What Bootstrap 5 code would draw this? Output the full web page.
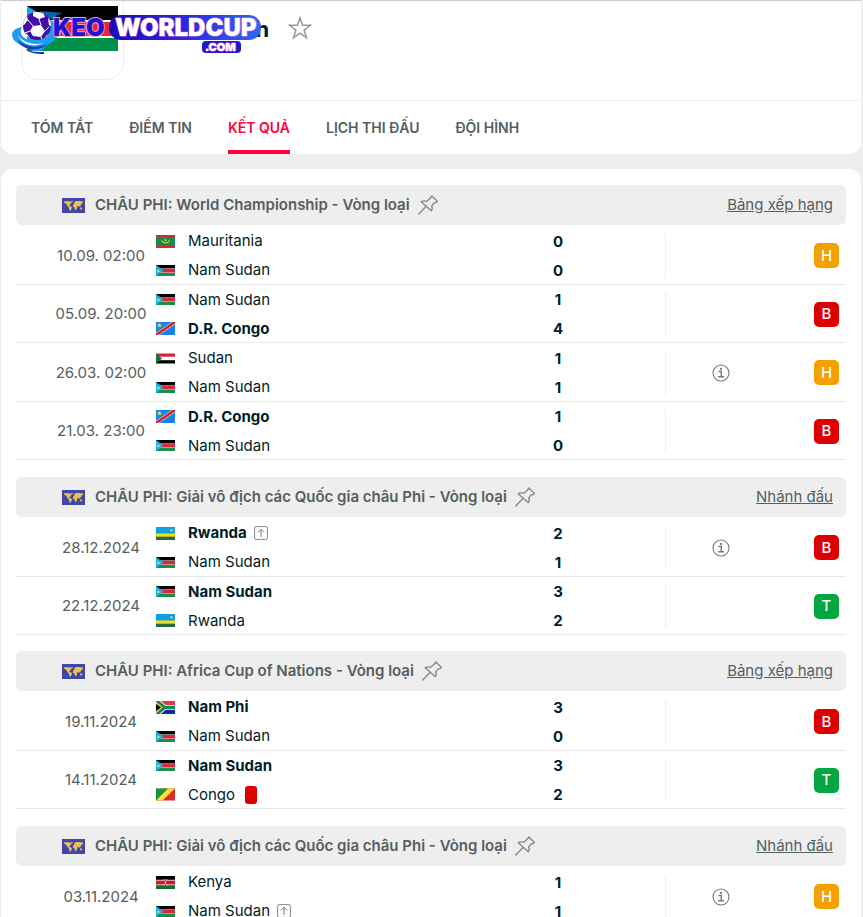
<!DOCTYPE html>
<html lang="vi">
<head>
<meta charset="utf-8">
<meta name="viewport" content="width=device-width, initial-scale=1">
<title>Nam Sudan - Kết quả</title>
<link href="https://cdn.jsdelivr.net/npm/bootstrap@5.3.0/dist/css/bootstrap.min.css" rel="stylesheet">
<style>
  body { background: #eee; color: #001e28; font-family: Inter, "Liberation Sans", sans-serif; font-size: 15px; line-height: 20px; overflow-x: hidden; }
  .panel { background: #fff; margin: 0 2px 0 1px; }
  .panel-top { border-top: 1px solid #ccc; border-radius: 0 0 12px 12px; }
  .panel-main { border-radius: 12px 12px 0 0; margin-top: 15px; padding: 16px 15px 0; }
  .team-head { height: 99px; padding-left: 20px; }
  .crest { width: 103px; height: 79px; border: 1px solid #eee; border-top: 0; border-radius: 0 0 18px 18px; padding: 5px; }
  .crest svg { width: 91px; height: 45px; }
  .team-name { font-size: 22px; line-height: 30px; font-weight: 700; margin: 13px 0 0 22px; }
  .fav { margin: 15px 0 0 19px; color: #999; line-height: 0; }
  .brand { left: 10px; top: 4px; }
  .tabs { gap: 36px; padding: 0 30px; border-top: 1px solid #eee; }
  .tabs a { color: #555e61; font-size: 14px; font-weight: 600; line-height: 20px; padding: 17px 0 12px; border-bottom: 4px solid transparent; text-decoration: none; }
  .tabs a.active { color: #ff0046; border-color: #ff0046; }
  .group { margin-bottom: 17px; }
  .group:nth-child(even) { margin-bottom: 16px; }
  .group-head { height: 40px; background: #eee; border-radius: 6px; padding: 0 13px 0 46px; margin-bottom: 1px; color: #555e61; }
  .group-head h2 { font-size: 15px; line-height: 20px; font-weight: 600; margin: 0 8px 0 10px; }
  .group-head a { color: #555e61; }
  .pin { color: #888; line-height: 0; }
  .matches { table-layout: fixed; color: inherit; }
  .matches td { padding: 0; height: 59px; border: 0; box-shadow: inset 0 -1px #e8e8e8; background: none; color: inherit; }
  .matches tr:nth-child(even) td { height: 58px; }
  .c-time { width: 140px; }
  .c-score { width: 214px; }
  .c-info { width: 110px; }
  .c-form { width: 71px; }
  .matches td.when { color: #555e61; padding-left: 30px; }
  .matches td.outcome { padding-right: 7px; }
  .side { height: 29px; display: flex; align-items: center; gap: 13px; }
  .side svg.fl { width: 19px; height: 13px; flex: none; }
  .side .extra { margin-left: -6px; }
  .side .red-card { margin-left: -3px; }
  .score { line-height: 29px; font-weight: 700; }
  .note { height: 44px; border-left: 1px solid #eee; color: #777; }
  .form-tag { width: 25px; height: 25px; border-radius: 5px; color: #fff; font-weight: 500; }
  .draw { background: #f3a000; }
  .loss { background: #dc0000; }
  .win { background: #00a83f; }
  .red-card { width: 12px; height: 18px; border-radius: 3px; background: #dc0000; }
</style>
<script src="https://cdn.jsdelivr.net/npm/bootstrap@5.3.0/dist/js/bootstrap.bundle.min.js"></script>
</head>
<body>
<svg width="0" height="0" class="position-absolute" aria-hidden="true">
  <defs>
    <symbol id="ssd" viewBox="0 0 19 13"><path fill="#000" d="M0 1h19v4H0z"/><path fill="#e9c9c9" d="M0 4.400h19v5H0z"/><path fill="#d8283a" d="M0 5h19v3.400H0z"/><path fill="#16904a" d="M0 9h19v3H0z"/><path fill="#19b5e0" d="M0 1l7.500 5.500L0 12z"/><path fill="#c8e9b0" d="M1.500 5.200l1 .9 1.200-.2-.6 1 .6 1-1.200-.2-1 .8z"/></symbol>
    <symbol id="mrt" viewBox="0 0 19 13"><path fill="#cf2b37" d="M0 0h19v13H0z"/><path fill="#178c4b" d="M0 2h19v9H0z"/><path fill="none" stroke="#f2d432" stroke-width="1.200" d="M5.500 5.500q4 5 8 0"/><circle cx="9.500" cy="5" r=".9" fill="#f2d432"/></symbol>
    <symbol id="cod" viewBox="0 0 19 13"><path fill="#1683ee" d="M0 0h19v13H0z"/><path stroke="#f0d2a0" stroke-width="3.800" d="M0 13L19 0"/><path stroke="#cd2433" stroke-width="2.600" d="M0 13L19 0"/><path fill="#f7e03c" d="M3.500 1l.7 1.500 1.700.1-1.200 1.100.4 1.700-1.600-.9-1.500.9.4-1.700-1.300-1.100 1.700-.1z"/></symbol>
    <symbol id="sdn" viewBox="0 0 19 13"><path fill="#fff" d="M0 1h19v10H0z"/><path fill="#dc1f3a" d="M0 1.500h19v3.200H0z"/><path fill="#000" d="M0 8.200h19v3.300H0z"/><path fill="#14763b" d="M0 1.500l6 5-6 5z"/></symbol>
    <symbol id="rwa" viewBox="0 0 19 13"><path fill="#0fa0e0" d="M0 0h19v7H0z"/><path fill="#f6db1f" d="M0 6.500h19V10H0z"/><path fill="#276b3e" d="M0 9.700h19V13H0z"/><circle cx="15.500" cy="3.200" r="1.300" fill="#d9c95b"/></symbol>
    <symbol id="zaf" viewBox="0 0 19 13"><path fill="#e23b3f" d="M0 0h19v6H0z"/><path fill="#0b2c9d" d="M0 7h19v6H0z"/><path fill="none" stroke="#fff" stroke-width="4.600" d="M1 0l8 6.500L1 13M9 6.500h10"/><path fill="#f5b82e" d="M0 1.500l7 5-7 5z"/><path fill="none" stroke="#118456" stroke-width="2.800" d="M1 0l8 6.500L1 13M9 6.500h10"/><path fill="#000" d="M0 3l5 3.500L0 10z"/></symbol>
    <symbol id="cog" viewBox="0 0 19 13"><path fill="#dd2a24" d="M0 .5h19v12H0z"/><path fill="#f9de3c" d="M0 .5h19L6.500 12.500H0z"/><path fill="#13963f" d="M0 .5h12L0 12.500z"/></symbol>
    <symbol id="ken" viewBox="0 0 19 13"><path fill="#000" d="M0 0h19v5H0z"/><path fill="#156b2f" d="M0 8h19v5H0z"/><path fill="#fff" d="M0 3.800h19v5.400H0z"/><path fill="#c81c2c" d="M0 4.500h19v4H0z"/><ellipse cx="9.500" cy="6.500" rx="1.700" ry="3.800" fill="#a01420"/><path stroke="#fff" stroke-width=".7" d="M8 3l3 7M11 3L8 10"/></symbol>
    <symbol id="map" viewBox="0 0 23 15"><path fill="#3f48a8" d="M0 0h23v15H0z"/><path fill="#ecc055" d="M2 3.500l4-.5 1.500.8L10.500 3l.5.800-2 1.200-1 1.900-1 .3.700.9 2.300.9-.4 1.800-1.500 2.400-.9-2.300-.5-1.700-1.600-1.700L4 5.600 2 4.800zM12 4.500l2-1.500 3 .1 3.700.4.500 1.300-1.700.9-.7 1.900-1.200.4-.5 1.200-1-1.300-1 .200.200 1.200-.8 1.900-1 1.300-.8-1.700-.3-1.600-1.500-.5L11 6.700l1.300-1zM18 9.300l2 .5.300 1.500-2 .200z"/></symbol>
    <symbol id="pin" viewBox="0 0 20 20"><path fill="none" stroke="currentColor" stroke-width="1.400" stroke-linejoin="round" stroke-linecap="round" d="M13.800 1l5.500 5.300-1 1.200-2.200.4-2.400 3.300c.9 1.700.7 3-.3 4.500L3.200 6.800c1.600-1.100 3.300-1.200 5.400-.5l3.700-3zM8 11.500L.8 18.900"/></symbol>
    <symbol id="info" viewBox="0 0 18 18"><circle cx="9" cy="9" r="8" fill="none" stroke="currentColor" stroke-width="1.100"/><path fill="none" stroke="currentColor" stroke-width="1.400" d="M6.500 7.500h2.800v5M6.200 12.700h5.800"/><circle cx="9" cy="4.900" r="1.100" fill="currentColor"/></symbol>
    <symbol id="adv" viewBox="0 0 14 14"><rect x=".6" y=".6" width="12.800" height="12.800" rx="1.500" fill="none" stroke="#888" stroke-width="1"/><path fill="none" stroke="#777" stroke-width="1" d="M7 11V3.500M3.800 6.500L7 3.300l3.200 3.200"/></symbol>
  </defs>
</svg>

<header class="panel panel-top position-relative">
  <div class="team-head d-flex align-items-start">
    <div class="crest">
      <svg viewBox="0 0 92 45" preserveAspectRatio="none" class="d-block" role="img" aria-label="Cờ Nam Sudan"><path d="M0 0h92v15H0z"/><path fill="#fff" d="M0 14h92v18H0z"/><path fill="#ee2436" d="M0 16h92v14H0z"/><path fill="#009149" d="M0 32h92v13H0z"/><path fill="#19a5e8" d="M0 0l34 20v8L14 45H6L0 40z"/></svg>
    </div>
    <h1 class="team-name">Nam Sudan</h1>
    <button type="button" class="btn p-0 border-0 fav" aria-label="Thêm vào yêu thích"><svg width="24" height="24" viewBox="0 0 24 24"><path fill="none" stroke="currentColor" stroke-width="1.500" d="M12 1.800l2.500 7.500h8l-6.400 4.800 2.400 7.700-6.500-4.700-6.500 4.700 2.400-7.700-6.400-4.800h8z"/></svg></button>
  </div>
  <svg class="brand position-absolute" width="262" height="52" viewBox="0 0 262 52" role="img" aria-label="KEO WORLDCUP .COM">
    <defs>
      <linearGradient id="pill"><stop offset="0" stop-color="#1c08b8"/><stop offset=".5" stop-color="#2a28e0"/><stop offset="1" stop-color="#2f68f0"/></linearGradient>
      <clipPath id="ball"><circle cx="26" cy="21" r="14"/></clipPath>
    </defs>
    <path fill="#0f5ea8" d="M28 6l14 1 10 1-8 3 4 2-10 1z"/>
    <path fill="#1f9cf0" d="M11 22C-1 24-1 32 5 37c7 6 16 7 24 6l14-7c3-4 3-9 1-14 0 7-7 13-16 14C16 37 6 31 11 22z"/>
    <path fill="#fff" d="M6 28c3 8 14 13 26 10-10 5-22 2-26-10z"/>
    <path fill="#1b35c8" d="M7 35c7 7 18 9 30 4-6 5-13 6-18 5-6-1-10-4-12-9z"/>
    <path fill="#1a2fb4" d="M14 44c6 3 11 3 19 3v2c-8 0-15-1-19-5z"/>
    <circle cx="26" cy="21" r="14" fill="#4210a8"/>
    <g clip-path="url(#ball)">
      <path fill="#fff" d="M22 21l8-1 4 6-4 6-8-1-3-5zM22 6l10 1 2 5-6 2-6-3zM10 14l6-3 1 4-4 5-2 0zM37 13l5 4 0 6-4-3zM12 28l4 1 4 6-4 1zM36 30l4-2-5 8-4 0z"/>
      <path fill="none" stroke="#fff" stroke-width="1" d="M22 21l-5-6M30 20l-2-6M34 26l4-4M30 32l2 4M19 26l-5 2"/>
    </g>
    <rect x="98" y="10" width="152" height="25" rx="12" fill="url(#pill)"/>
    <rect x="191" y="36" width="39" height="12" rx="4" fill="#2018cc"/>
    <g font-family="Inter, sans-serif" font-weight="900" paint-order="stroke" stroke-linejoin="round">
      <text x="42" y="31" font-size="24" fill="#1d12d6" stroke="#f7a0b4" stroke-width="2">KEO</text>
      <text x="104" y="31" font-size="24" fill="#fff" stroke="#d76fd8" stroke-width="1">WORLDCUP</text>
      <text x="194" y="46" font-size="11" fill="#fff" stroke="#d76fd8" stroke-width="1">.COM</text>
    </g>
  </svg>
  <nav class="tabs d-flex" aria-label="Mục đội bóng">
    <a href="#">TÓM TẮT</a>
    <a href="#">ĐIỂM TIN</a>
    <a href="#" class="active" aria-current="page">KẾT QUẢ</a>
    <a href="#">LỊCH THI ĐẤU</a>
    <a href="#">ĐỘI HÌNH</a>
  </nav>
</header>

<main class="panel panel-main">
  <section class="group">
    <div class="group-head d-flex align-items-center">
      <svg width="23" height="15"><use href="#map"/></svg>
      <h2>CHÂU PHI: World Championship - Vòng loại</h2>
      <button type="button" class="btn p-0 border-0 pin" aria-label="Ghim giải"><svg width="20" height="20"><use href="#pin"/></svg></button>
      <a href="#" class="ms-auto">Bảng xếp hạng</a>
    </div>
    <table class="table matches align-middle m-0">
      <colgroup><col class="c-time"><col><col class="c-score"><col class="c-info"><col class="c-form"></colgroup>
      <tbody>
      <tr>
        <td class="when text-center">10.09. 02:00</td>
        <td><div class="side"><svg class="fl"><use href="#mrt"/></svg>Mauritania</div><div class="side"><svg class="fl"><use href="#ssd"/></svg>Nam Sudan</div></td>
        <td class="score text-center">0<br>0</td>
        <td><div class="note"></div></td>
        <td class="outcome"><span class="form-tag draw d-flex align-items-center justify-content-center ms-auto">H</span></td>
      </tr>
      <tr>
        <td class="when text-center">05.09. 20:00</td>
        <td><div class="side"><svg class="fl"><use href="#ssd"/></svg>Nam Sudan</div><div class="side fw-bold"><svg class="fl"><use href="#cod"/></svg>D.R. Congo</div></td>
        <td class="score text-center">1<br>4</td>
        <td><div class="note"></div></td>
        <td class="outcome"><span class="form-tag loss d-flex align-items-center justify-content-center ms-auto">B</span></td>
      </tr>
      <tr>
        <td class="when text-center">26.03. 02:00</td>
        <td><div class="side"><svg class="fl"><use href="#sdn"/></svg>Sudan</div><div class="side"><svg class="fl"><use href="#ssd"/></svg>Nam Sudan</div></td>
        <td class="score text-center">1<br>1</td>
        <td><div class="note d-flex align-items-center justify-content-center"><svg width="18" height="18"><use href="#info"/></svg></div></td>
        <td class="outcome"><span class="form-tag draw d-flex align-items-center justify-content-center ms-auto">H</span></td>
      </tr>
      <tr>
        <td class="when text-center">21.03. 23:00</td>
        <td><div class="side fw-bold"><svg class="fl"><use href="#cod"/></svg>D.R. Congo</div><div class="side"><svg class="fl"><use href="#ssd"/></svg>Nam Sudan</div></td>
        <td class="score text-center">1<br>0</td>
        <td><div class="note"></div></td>
        <td class="outcome"><span class="form-tag loss d-flex align-items-center justify-content-center ms-auto">B</span></td>
      </tr>
      </tbody>
    </table>
  </section>

  <section class="group">
    <div class="group-head d-flex align-items-center">
      <svg width="23" height="15"><use href="#map"/></svg>
      <h2>CHÂU PHI: Giải vô địch các Quốc gia châu Phi - Vòng loại</h2>
      <button type="button" class="btn p-0 border-0 pin" aria-label="Ghim giải"><svg width="20" height="20"><use href="#pin"/></svg></button>
      <a href="#" class="ms-auto">Nhánh đấu</a>
    </div>
    <table class="table matches align-middle m-0">
      <colgroup><col class="c-time"><col><col class="c-score"><col class="c-info"><col class="c-form"></colgroup>
      <tbody>
      <tr>
        <td class="when text-center">28.12.2024</td>
        <td><div class="side fw-bold"><svg class="fl"><use href="#rwa"/></svg>Rwanda<svg class="extra" width="14" height="14"><use href="#adv"/></svg></div><div class="side"><svg class="fl"><use href="#ssd"/></svg>Nam Sudan</div></td>
        <td class="score text-center">2<br>1</td>
        <td><div class="note d-flex align-items-center justify-content-center"><svg width="18" height="18"><use href="#info"/></svg></div></td>
        <td class="outcome"><span class="form-tag loss d-flex align-items-center justify-content-center ms-auto">B</span></td>
      </tr>
      <tr>
        <td class="when text-center">22.12.2024</td>
        <td><div class="side fw-bold"><svg class="fl"><use href="#ssd"/></svg>Nam Sudan</div><div class="side"><svg class="fl"><use href="#rwa"/></svg>Rwanda</div></td>
        <td class="score text-center">3<br>2</td>
        <td><div class="note"></div></td>
        <td class="outcome"><span class="form-tag win d-flex align-items-center justify-content-center ms-auto">T</span></td>
      </tr>
      </tbody>
    </table>
  </section>

  <section class="group">
    <div class="group-head d-flex align-items-center">
      <svg width="23" height="15"><use href="#map"/></svg>
      <h2>CHÂU PHI: Africa Cup of Nations - Vòng loại</h2>
      <button type="button" class="btn p-0 border-0 pin" aria-label="Ghim giải"><svg width="20" height="20"><use href="#pin"/></svg></button>
      <a href="#" class="ms-auto">Bảng xếp hạng</a>
    </div>
    <table class="table matches align-middle m-0">
      <colgroup><col class="c-time"><col><col class="c-score"><col class="c-info"><col class="c-form"></colgroup>
      <tbody>
      <tr>
        <td class="when text-center">19.11.2024</td>
        <td><div class="side fw-bold"><svg class="fl"><use href="#zaf"/></svg>Nam Phi</div><div class="side"><svg class="fl"><use href="#ssd"/></svg>Nam Sudan</div></td>
        <td class="score text-center">3<br>0</td>
        <td><div class="note"></div></td>
        <td class="outcome"><span class="form-tag loss d-flex align-items-center justify-content-center ms-auto">B</span></td>
      </tr>
      <tr>
        <td class="when text-center">14.11.2024</td>
        <td><div class="side fw-bold"><svg class="fl"><use href="#ssd"/></svg>Nam Sudan</div><div class="side"><svg class="fl"><use href="#cog"/></svg>Congo<span class="red-card" role="img" aria-label="Thẻ đỏ"></span></div></td>
        <td class="score text-center">3<br>2</td>
        <td><div class="note"></div></td>
        <td class="outcome"><span class="form-tag win d-flex align-items-center justify-content-center ms-auto">T</span></td>
      </tr>
      </tbody>
    </table>
  </section>

  <section class="group mb-0">
    <div class="group-head d-flex align-items-center">
      <svg width="23" height="15"><use href="#map"/></svg>
      <h2>CHÂU PHI: Giải vô địch các Quốc gia châu Phi - Vòng loại</h2>
      <button type="button" class="btn p-0 border-0 pin" aria-label="Ghim giải"><svg width="20" height="20"><use href="#pin"/></svg></button>
      <a href="#" class="ms-auto">Nhánh đấu</a>
    </div>
    <table class="table matches align-middle m-0">
      <colgroup><col class="c-time"><col><col class="c-score"><col class="c-info"><col class="c-form"></colgroup>
      <tbody>
      <tr>
        <td class="when text-center">03.11.2024</td>
        <td><div class="side"><svg class="fl"><use href="#ken"/></svg>Kenya</div><div class="side"><svg class="fl"><use href="#ssd"/></svg>Nam Sudan<svg class="extra" width="14" height="14"><use href="#adv"/></svg></div></td>
        <td class="score text-center">1<br>1</td>
        <td><div class="note d-flex align-items-center justify-content-center"><svg width="18" height="18"><use href="#info"/></svg></div></td>
        <td class="outcome"><span class="form-tag draw d-flex align-items-center justify-content-center ms-auto">H</span></td>
      </tr>
      </tbody>
    </table>
  </section>
</main>
</body>
</html>
